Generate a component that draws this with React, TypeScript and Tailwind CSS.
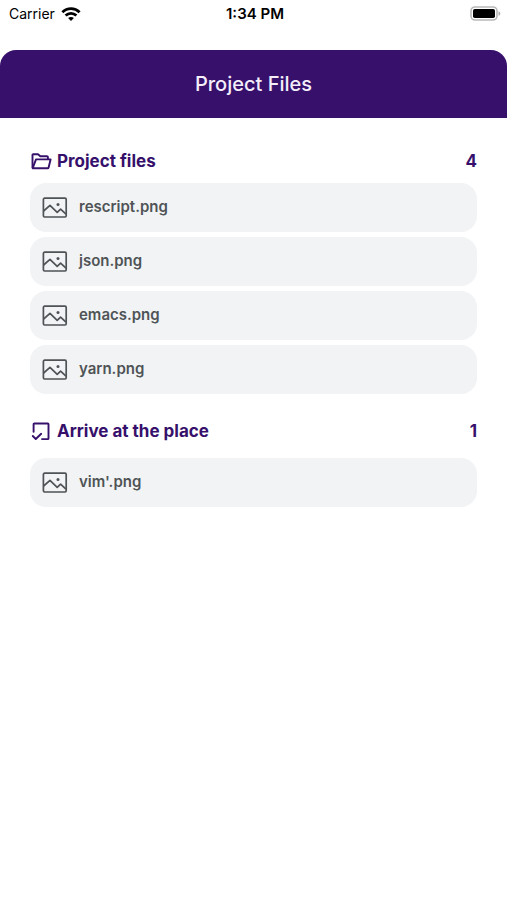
type FileGroup = {
    title: string;
    icon: "folder" | "place";
    files: string[];
};

const groups: FileGroup[] = [
    {
        title: "Project files",
        icon: "folder",
        files: ["rescript.png", "json.png", "emacs.png", "yarn.png"],
    },
    {
        title: "Arrive at the place",
        icon: "place",
        files: ["vim'.png"],
    },
];

const WifiIcon = () => (
    <svg width="20" height="15" viewBox="0 0 20 15" fill="none" stroke="#000" strokeWidth="2.8" aria-hidden="true">
        <path d="M1.4 5.2C6.2 .5 13.8 .5 18.6 5.2" />
        <path d="M4.6 8.6C7.7 5.6 12.3 5.6 15.4 8.6" />
        <path d="M7.1 11.1C8.8 9.5 11.2 9.5 12.9 11.1L10 13.9Z" fill="#000" stroke="none" />
    </svg>
);

const BatteryIcon = () => (
    <svg width="31" height="16" viewBox="0 0 31 16" aria-hidden="true">
        <rect x="1" y="1" width="26" height="13" rx="4" fill="#fff" stroke="#b9b9b9" strokeWidth="1.6" />
        <rect x="3" y="3" width="22" height="9" rx="1.8" fill="#000" />
        <path d="M28.5 5.2C31 6.2 31 8.8 28.5 9.8Z" fill="#b0b0b0" />
    </svg>
);

const FolderIcon = () => (
    <svg width="22" height="18" viewBox="0 0 22 18" fill="none" stroke="currentColor" strokeWidth="1.9" strokeLinejoin="round" aria-hidden="true">
        <path d="M2.5 15V1.9Q2.5 1.2 3.2 1.2H8L10.3 3.2H17Q17.9 3.2 17.9 4.1V6.4" />
        <path d="M2.7 15.2L6 6.4H20.6L18.6 14.4Q18.4 15.2 17.6 15.2Z" />
    </svg>
);

const PlaceIcon = () => (
    <svg width="22" height="20" viewBox="0 0 22 20" fill="none" stroke="currentColor" strokeWidth="1.9" strokeLinecap="round" strokeLinejoin="round" aria-hidden="true">
        <path d="M3.6 9.8V2.2Q3.6 1.5 4.3 1.5H17.8Q18.5 1.5 18.5 2.2V16.4Q18.5 17.1 17.8 17.1H12" />
        <path d="M2.8 14L5.8 17L11.2 11.8" />
    </svg>
);

const PictureIcon = () => (
    <svg width="26" height="22" viewBox="0 0 26 22" fill="none" stroke="currentColor" strokeWidth="1.7" strokeLinejoin="round" aria-hidden="true">
        <rect x="1.4" y="1.2" width="22.8" height="18.8" rx="1.2" />
        <path d="M1.6 14L8 8.4L15.2 15.4L18.6 12.2L24 17.2" />
        <circle cx="16" cy="7.4" r="1.5" fill="currentColor" stroke="none" />
    </svg>
);

const StatusBar = () => (
    <div className="grid h-[50px] grid-cols-3 items-start pt-1 pr-1.5 pl-[9px] text-black">
        <div className="flex h-5 items-center gap-1.5 text-[14px] leading-5">
            Carrier
            <WifiIcon />
        </div>
        <time className="h-5 text-center text-[15px] leading-5 font-semibold">1:34 PM</time>
        <div className="flex h-5 items-center justify-end">
            <BatteryIcon />
        </div>
    </div>
);

const FileRow = ({ name }: { name: string }) => (
    <li className="flex h-[49px] items-center gap-[11px] rounded-2xl bg-[#f1f3f5] px-3 text-[15px] font-semibold text-[#4f5356]">
        <PictureIcon />
        {name}
    </li>
);

export default function App() {
    return (
        <div className="min-h-screen bg-white font-['Inter',sans-serif]">
            <StatusBar />
            <header className="flex h-[68px] items-center justify-center rounded-t-2xl bg-[#36106b]">
                <h1 className="text-[20px] font-medium text-[#f3eefa]">Project Files</h1>
            </header>

            <main className="flex flex-col gap-[26px] px-[30px] pt-8">
                {groups.map((group) => (
                    <section key={group.title}>
                        <div className="flex h-6 items-center gap-[5px] text-[17px] font-bold text-[#36106b]">
                            {group.icon === "folder" ? <FolderIcon /> : <PlaceIcon />}
                            <h2>{group.title}</h2>
                            <span className="ml-auto">{group.files.length}</span>
                        </div>
                        <ul className={group.icon === "folder" ? "mt-[9px] flex flex-col gap-[5px]" : "mt-[14px] flex flex-col gap-[5px]"}>
                            {group.files.map((file) => (
                                <FileRow key={file} name={file} />
                            ))}
                        </ul>
                    </section>
                ))}
            </main>
        </div>
    );
}
